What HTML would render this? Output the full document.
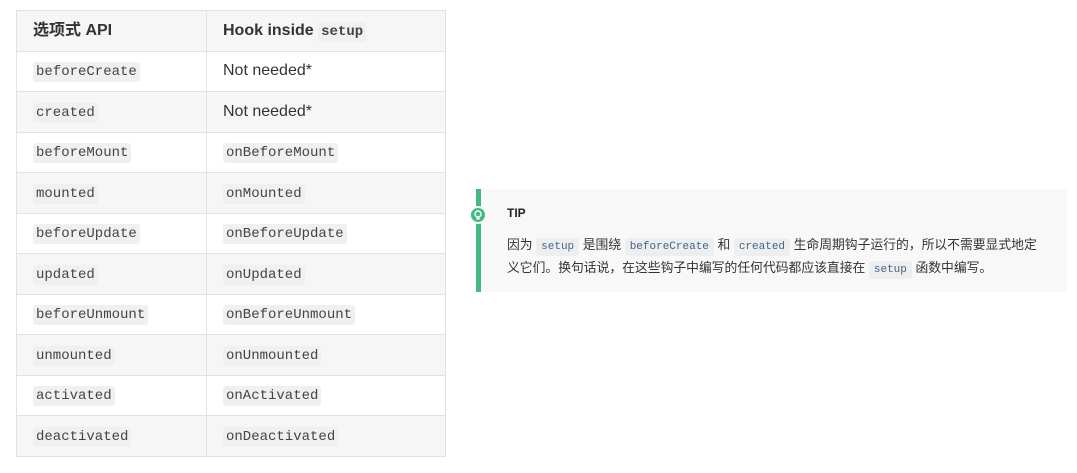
<!DOCTYPE html>
<html><head><meta charset="utf-8"><style>
body{margin:0;width:1077px;height:473px;background:#fff;font-family:"Liberation Sans","Noto Sans CJK SC",sans-serif;color:#2c3e50;position:relative;overflow:hidden}
table{position:absolute;left:16px;top:10px;border-collapse:collapse;width:430px}
td,th{border:1px solid #e2e2e2;height:39.5px;padding:0 0 0 16px;text-align:left;font-size:16px;color:#333;vertical-align:middle;line-height:20px}
th{font-weight:bold;font-size:16px}
td:first-child,th:first-child{width:173px}
tr:nth-child(odd){background:#f6f6f7}
code{font-family:"Liberation Mono",monospace;font-size:14px;background:#f0f0f0;padding:2px 3px;border-radius:3px;color:#444;line-height:16px}
.tip{position:absolute;left:476px;top:189px;width:591px;height:103px;background:#f8f8f8;border-left:5px solid #42b983;box-sizing:border-box}
.tip .t{position:absolute;left:26px;top:17px;font-weight:bold;font-size:12px;color:#222}
.tip p{position:absolute;left:26px;top:44px;margin:0;font-size:12.8px;line-height:23px;color:#333;width:565px;white-space:nowrap}
.tip code{font-size:11px;color:#476582;background:#eceef0;padding:3px 5px}
.ic{position:absolute;left:-12px;top:17px;width:18px;height:18px;border-radius:50%;background:#42b983;border:2px solid #f8f8f8;box-sizing:border-box}
</style></head><body>
<table>
<tr><th>选项式 API</th><th>Hook inside <code>setup</code></th></tr>
<tr><td><code>beforeCreate</code></td><td>Not needed*</td></tr>
<tr><td><code>created</code></td><td>Not needed*</td></tr>
<tr><td><code>beforeMount</code></td><td><code>onBeforeMount</code></td></tr>
<tr><td><code>mounted</code></td><td><code>onMounted</code></td></tr>
<tr><td><code>beforeUpdate</code></td><td><code>onBeforeUpdate</code></td></tr>
<tr><td><code>updated</code></td><td><code>onUpdated</code></td></tr>
<tr><td><code>beforeUnmount</code></td><td><code>onBeforeUnmount</code></td></tr>
<tr><td><code>unmounted</code></td><td><code>onUnmounted</code></td></tr>
<tr><td><code>activated</code></td><td><code>onActivated</code></td></tr>
<tr><td><code>deactivated</code></td><td><code>onDeactivated</code></td></tr>
</table>
<div class="tip">
<div class="ic"><svg width="14" height="14" viewBox="0 0 14 14" style="position:absolute;left:0;top:0"><circle cx="7" cy="6" r="3" fill="none" stroke="#fff" stroke-width="1.4"/><path d="M6 9v2h2V9" stroke="#fff" stroke-width="1.2" fill="none"/></svg></div>
<div class="t">TIP</div>
<p>因为 <code>setup</code> 是围绕 <code>beforeCreate</code> 和 <code>created</code> 生命周期钩子运行的，所以不需要显式地定<br>义它们。换句话说，在这些钩子中编写的任何代码都应该直接在 <code>setup</code> 函数中编写。</p>
</div>
</body></html>
